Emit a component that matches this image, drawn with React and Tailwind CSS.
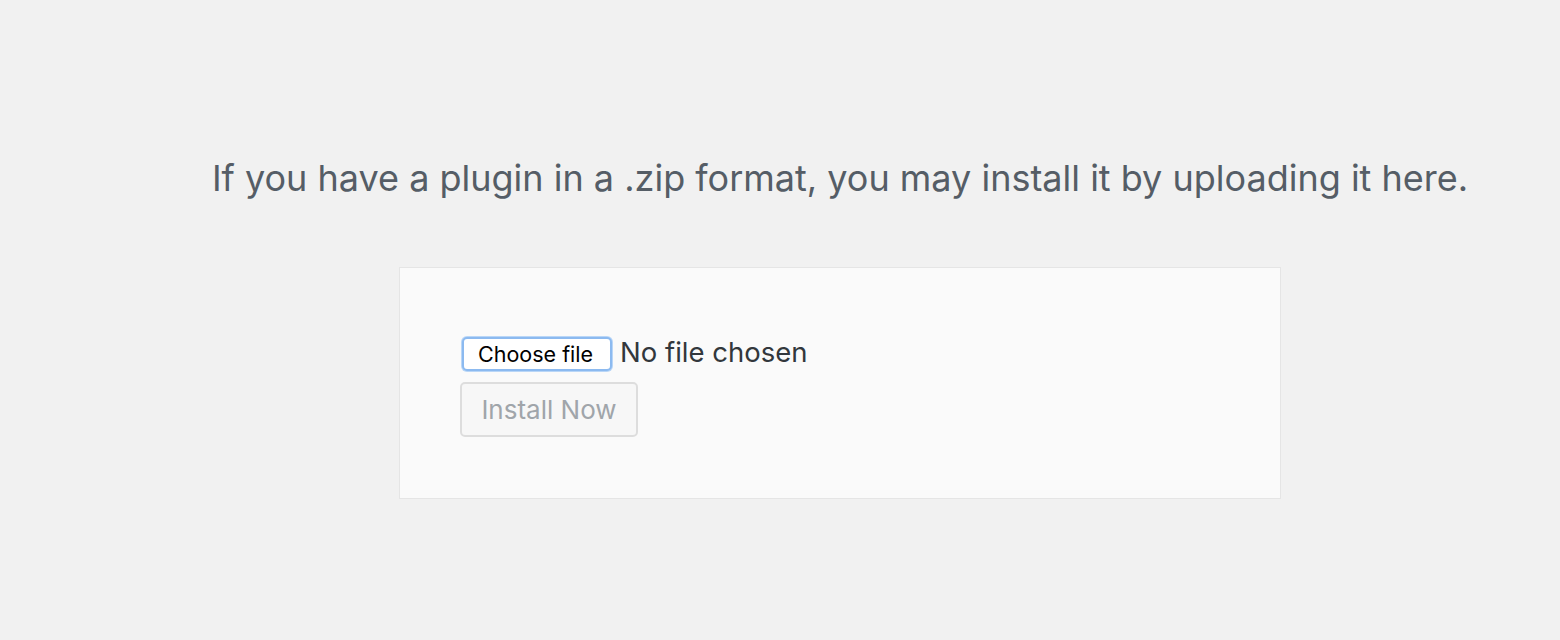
import React from 'react';

const App = () => {
  return (
    <div className="min-h-[640px] w-full bg-[#f1f1f1] font-['Inter',sans-serif] pl-[120px]">
      <div className="flex flex-col items-center pt-[155px]">
        {/* Help text */}
        <p className="text-[36px] leading-[46px] text-[#555d66]">
          If you have a plugin in a .zip format, you may install it by uploading it here.
        </p>

        {/* Upload box */}
        <div className="mt-[66px] w-[882px] h-[232px] bg-[#fafafa] border border-[#e5e5e5] pl-[62px] pt-[69px]">
          <div className="flex items-center gap-[8px] h-[34px]">
            <span className="h-[34px] pl-[14px] pr-[17px] flex items-center bg-white border-2 border-[#8cbaf0] rounded-[5px] shadow-[0_0_0_1px_#b9d6f7] text-[21.5px] text-black">
              Choose file
            </span>
            <span className="text-[27.5px] leading-[36px] -mt-[5px] text-[#32373c]">No file chosen</span>
          </div>
          <button
            disabled
            className="mt-[11px] -ml-[2px] w-[178px] h-[55px] bg-[#f7f7f7] border-2 border-[#dddddd] rounded-[5px] text-[26px] text-[#a0a5aa]"
          >
            Install Now
          </button>
        </div>
      </div>
    </div>
  );
};

export default App;
